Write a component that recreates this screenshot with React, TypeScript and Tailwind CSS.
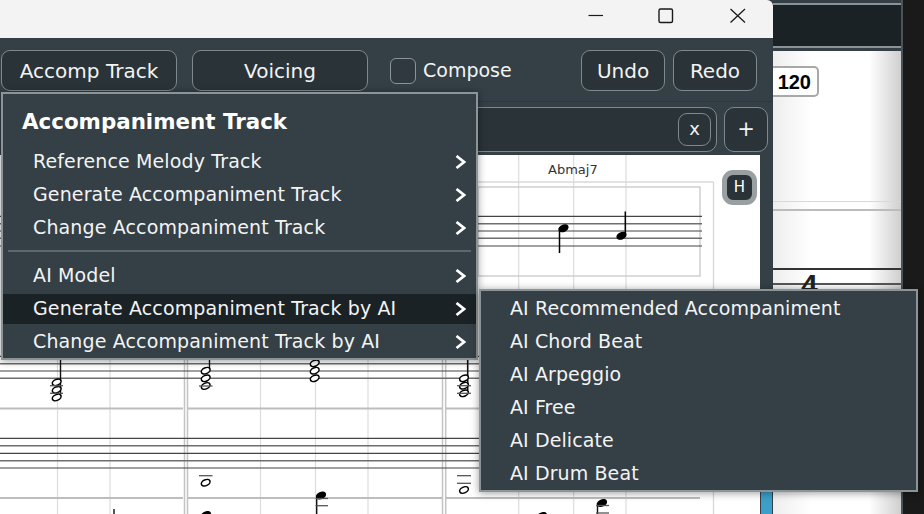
import type { ReactNode } from "react";

const font = "font-['DejaVu_Sans',sans-serif]";

const mainItems = ["Reference Melody Track", "Generate Accompaniment Track", "Change Accompaniment Track"];
const aiItems = ["AI Model", "Generate Accompaniment Track by AI", "Change Accompaniment Track by AI"];
const subItems = [
	"AI Recommended Accompaniment",
	"AI Chord Beat",
	"AI Arpeggio",
	"AI Free",
	"AI Delicate",
	"AI Drum Beat",
];

function Chevron() {
	return (
		<svg width="11" height="14" viewBox="0 0 11 14" fill="none" className="shrink-0">
			<path d="M1.5 1 L9 7 L1.5 13" stroke="#fff" strokeWidth="2.7" />
		</svg>
	);
}

function MenuRow({ label, active }: { label: string; active?: boolean }) {
	return (
		<div className="flex h-[33px] items-center">
			<div
				className={`flex h-[30px] w-full items-center justify-between pl-[30px] pr-[10px] ${
					active ? "bg-[#1a2226]" : ""
				}`}
			>
				<span>{label}</span>
				<Chevron />
			</div>
		</div>
	);
}

function ToolButton({ children, className }: { children: ReactNode; className: string }) {
	return (
		<button
			className={`flex h-[41px] items-center justify-center rounded-[9px] border border-[#7f898d] bg-[#2a3338] text-[20px] text-[#f2f4f4] ${className}`}
		>
			{children}
		</button>
	);
}

function Head({ x, y, filled }: { x: number; y: number; filled?: boolean }) {
	return (
		<ellipse
			cx={x}
			cy={y}
			rx="4.6"
			ry="2.9"
			transform={`rotate(-24 ${x} ${y})`}
			fill={filled ? "#000" : "#fff"}
			stroke="#000"
			strokeWidth="1.5"
		/>
	);
}

function Staff({ ys, x2 = 702 }: { ys: number[]; x2?: number }) {
	return (
		<>
			{ys.map((y, i) => (
				<line
					key={y}
					x1="0"
					x2={x2}
					y1={y}
					y2={y}
					stroke={i % 2 ? "#6e6e6e" : "#444"}
					strokeWidth={i % 2 ? 1.6 : 1.2}
				/>
			))}
		</>
	);
}

function Ledger({ x1, x2, y }: { x1: number; x2: number; y: number }) {
	return <line x1={x1} x2={x2} y1={y} y2={y} stroke="#555" strokeWidth="1.3" />;
}

function Score() {
	const beats = [57.5, 110, 260.5, 315.5, 368, 518.7, 573.7, 626];
	const bars = [184.5, 187.5, 442.5, 445.7];
	return (
		<svg width="760" height="359" viewBox="0 155 760 359" className="block">
			<rect x="0" y="155" width="760" height="359" fill="#fff" />
			{beats.map((x) => (
				<line key={x} x1={x} x2={x} y1="155" y2="514" stroke="#dcdcdc" strokeWidth="1.2" />
			))}
			{bars.map((x) => (
				<line key={x} x1={x} x2={x} y1="155" y2="514" stroke="#c4c4c4" strokeWidth="1.5" />
			))}
			<rect x="478" y="187" width="222" height="89" fill="none" stroke="#c8c8c8" strokeWidth="1.3" />
			<line x1="713.5" x2="713.5" y1="182" y2="514" stroke="#d8d8d8" strokeWidth="1.3" />
			<line x1="478" x2="713.5" y1="182" y2="182" stroke="#d8d8d8" strokeWidth="1.3" />
			{[
				[0, 183],
				[188, 442],
				[446, 700],
			].map(([a, b]) => (
				<g key={a}>
					<line x1={a} x2={b} y1="408.5" y2="408.5" stroke="#bdbdbd" strokeWidth="2" />
					<line x1={a} x2={b} y1="498" y2="498" stroke="#bdbdbd" strokeWidth="2" />
				</g>
			))}

			<Staff ys={[216.3, 223.7, 231, 238.3, 246]} />
			<Staff ys={[356.3, 363.7, 371, 378.3]} />
			<Staff ys={[438.3, 445.7, 453.3, 460.7, 468]} />

			{/* Abmaj7 bar */}
			<line x1="559.5" x2="559.5" y1="228" y2="253" stroke="#000" strokeWidth="1.5" />
			<Head x={563.5} y={228.3} filled />
			<line x1="625.3" x2="625.3" y1="211.5" y2="235" stroke="#000" strokeWidth="1.5" />
			<Head x={621.5} y={235.8} filled />

			{/* chords */}
			<line x1="60.5" x2="60.5" y1="358" y2="396" stroke="#111" strokeWidth="1.4" />
			<Head x={56.7} y={382.3} />
			<Head x={56.7} y={389.8} />
			<Head x={56.7} y={397.5} />
			<Ledger x1={50} x2={63} y={385.7} />
			<Ledger x1={50} x2={63} y={393.3} />

			<line x1="209.5" x2="209.5" y1="358" y2="372" stroke="#111" strokeWidth="1.4" />
			<Head x={205.7} y={370.7} />
			<Head x={205.7} y={378.3} />
			<Head x={205.7} y={386} />
			<Ledger x1={199} x2={212.5} y={386} />

			<line x1="318.5" x2="318.5" y1="358" y2="363" stroke="#111" strokeWidth="1.4" />
			<Head x={314.7} y={363.3} />
			<Head x={314.7} y={370.7} />
			<Head x={314.7} y={378.3} />

			<line x1="467.7" x2="467.7" y1="358" y2="390" stroke="#111" strokeWidth="1.6" />
			<Head x={464} y={378.3} />
			<Head x={464} y={385.7} />
			<Head x={464} y={393.3} />
			<Ledger x1={457} x2={471} y={385.7} />
			<Ledger x1={457} x2={471} y={393.3} />

			{/* lower staff */}
			<Ledger x1={199} x2={212.5} y={475.7} />
			<Head x={205.7} y={482.7} />
			<Ledger x1={457} x2={471} y={475.7} />
			<Ledger x1={457} x2={471} y={483.3} />
			<Head x={464} y={490} />

			<line x1="316.7" x2="316.7" y1="496" y2="514" stroke="#111" strokeWidth="1.4" />
			<Head x={321} y={495.5} filled />
			<Ledger x1={315.5} x2={328} y={498.5} />
			<Ledger x1={315.5} x2={328} y={505.7} />

			<line x1="597.5" x2="597.5" y1="503" y2="514" stroke="#111" strokeWidth="1.4" />
			<Head x={602} y={503} filled />
			<Ledger x1={596} x2={609} y={505.5} />
			<Ledger x1={596} x2={609} y={513} />

			<line x1="114" x2="114" y1="509" y2="514" stroke="#111" strokeWidth="1.4" />
			<Head x={206} y={515} filled />
			<Head x={542} y={516} filled />
		</svg>
	);
}

function TitleBar() {
	return (
		<div className="flex h-[38px] shrink-0 items-start justify-end rounded-tr-[6px] bg-[#f3f3f3]">
			<svg width="200" height="38" viewBox="573 0 200 38" fill="none" stroke="#1a1a1a">
				<line x1="588.5" x2="603" y1="15.5" y2="15.5" strokeWidth="1.2" />
				<rect x="659" y="9" width="13.5" height="13.5" rx="1.5" strokeWidth="1.4" />
				<path d="M730.5 9 L745 22.5 M745 9 L730.5 22.5" strokeWidth="1.3" />
			</svg>
		</div>
	);
}

function SidePanel() {
	return (
		<div className="flex h-full w-[130px] shrink-0 flex-col border-r-2 border-[#4a5358]">
			<div className="h-[3px] bg-[#343f46]" />
			<div className="h-[2px] bg-[#8a9498]" />
			<div className="h-[41px] bg-[#1b2225]" />
			<div className="h-[2px] bg-[#8a9498]" />
			<div className="h-[3px] bg-[#343f46]" />
			<div className="relative flex-1 bg-[linear-gradient(90deg,#eeeeee_0%,#ffffff_30%,#ffffff_75%,#cfcfcf_100%)]">
				<div className="absolute left-0 top-[15px] flex h-[31px] w-[46px] items-center justify-end rounded-r-[5px] border-2 border-l-0 border-[#a8a8a8] bg-white pr-[6px] font-['Liberation_Sans',sans-serif] text-[20px] leading-none font-bold text-black">
					120
				</div>
				<div className="absolute inset-x-0 top-[150px] h-px bg-[#d8d8d8]" />
				<div className="absolute inset-x-0 top-[158px] h-[2px] bg-[#bcbcbc]" />
				<div className="absolute inset-x-0 top-[217px] h-[2px] bg-[#333]" />
				<div className="absolute inset-x-0 top-[232px] h-[2px] bg-[#555]" />
				<span className="absolute left-[28px] top-[219px] font-['Liberation_Sans',sans-serif] text-[30px] leading-[30px] font-bold text-[#222]">
					4
				</span>
			</div>
		</div>
	);
}

export default function App() {
	return (
		<div className={`relative flex h-[514px] w-[924px] overflow-hidden bg-[#1a1a1a] ${font}`}>
			<div className="flex h-full w-[773px] shrink-0 flex-col bg-[#343f46]">
				<TitleBar />

				<div className="flex h-[64px] shrink-0 items-start border-b border-[#2e383e] pt-[12px] pl-px">
					<ToolButton className="w-[176px]">Accomp Track</ToolButton>
					<ToolButton className="ml-[15px] w-[176px]">Voicing</ToolButton>
					<div className="ml-[22px] flex h-[41px] w-[120px] items-center gap-[7px] text-[19px] text-[#f2f4f4]">
						<span className="h-[26px] w-[26px] shrink-0 rounded-[6px] border border-[#8b9498] bg-[#2f393f]" />
						Compose
					</div>
					<ToolButton className="ml-[71px] w-[84px]">Undo</ToolButton>
					<ToolButton className="ml-[8px] w-[84px]">Redo</ToolButton>
				</div>

				<div className="flex h-[53px] shrink-0 items-start pt-[5px] pl-[4px]">
					<div className="flex h-[45px] w-[713px] items-center justify-end rounded-[10px] border border-[#7f898d] bg-[#2a3338] pr-[5px]">
						<button className="flex h-[33px] w-[33px] items-center justify-center rounded-[9px] border border-[#7f898d] pb-[3px] text-[18px] text-[#f2f4f4]">
							x
						</button>
					</div>
					<button className="ml-[7px] flex h-[45px] w-[44px] items-center justify-center rounded-[10px] border border-[#7f898d] bg-[#2a3338] text-[21px] leading-none text-[#f2f4f4]">
						+
					</button>
				</div>

				<div className="relative flex-1 overflow-hidden">
					<Score />
					<span className="absolute left-[548px] top-[8px] text-[13px] leading-none text-[#333]">Abmaj7</span>
					<div className="absolute left-[722px] top-[15px] flex h-[35px] w-[35px] items-center justify-center rounded-[11px] border-[5px] border-[#9a9fa1] bg-[#2a3338] text-[15px] text-white">
						H
					</div>
					<div className="absolute left-[761px] top-[335px] h-[24px] w-[11px] bg-[#3c9fc9]" />
				</div>
			</div>

			<SidePanel />

			{/* Accomp Track menu */}
			<div className="absolute left-[1px] top-[92px] flex h-[268px] w-[477px] flex-col border-[2px] border-[#8b9498] bg-[#353f46] pt-[13px] text-[19px] tracking-[0.13px] text-[#f2f4f4] shadow-[0_1px_8px_rgba(0,0,0,0.4)]">
				<div className="mb-[8px] h-[30px] pl-[19px] text-[21.4px] leading-[30px] tracking-normal font-bold text-white">
					Accompaniment Track
				</div>
				{mainItems.map((item) => (
					<MenuRow key={item} label={item} />
				))}
				<div className="mx-[5px] mt-[6px] mb-[7px] h-[2px] bg-[#5d676c]" />
				{aiItems.map((item, i) => (
					<MenuRow key={item} label={item} active={i === 1} />
				))}
			</div>

			{/* Generate by AI submenu */}
			<div className="absolute left-[479px] top-[289px] flex h-[203px] w-[439px] flex-col border-[2px] border-[#8b9498] bg-[#353f46] pt-[1px] text-[19px] tracking-[0.1px] text-[#f2f4f4] shadow-[0_1px_8px_rgba(0,0,0,0.4)]">
				{subItems.map((item) => (
					<div key={item} className="flex h-[33px] items-center pl-[29px]">
						{item}
					</div>
				))}
			</div>
		</div>
	);
}
